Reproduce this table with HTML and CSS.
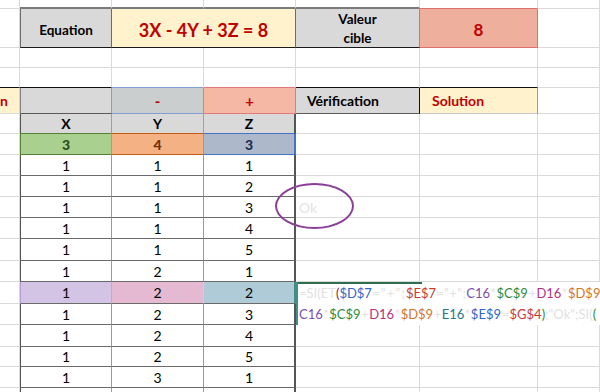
FILE: index.html
```html
<!DOCTYPE html>
<html lang="fr">
<head>
<meta charset="utf-8">
<link rel="stylesheet" href="styles.css">
</head>
<body>
<div class="sheet">
  <div class="row h9">
    <div class="c"></div><div class="c top-d"></div><div class="c top-d"></div><div class="c top-d"></div><div class="c top-d"></div><div class="c top-r"></div><div class="c"></div>
  </div>
  <div class="row h39">
    <div class="c"></div>
    <div class="c eq-label">Equation</div>
    <div class="c eq-val span2">3X - 4Y + 3Z = 8</div>
    <div class="c vc">Valeur<br>cible</div>
    <div class="c target">8</div>
    <div class="c"></div>
  </div>
  <div class="row h20">
    <div class="c"></div><div class="c"></div><div class="c"></div><div class="c"></div><div class="c"></div><div class="c"></div><div class="c"></div>
  </div>
  <div class="row h20">
    <div class="c bb-k"></div><div class="c bb-k"></div><div class="c bb-b"></div><div class="c bb-r"></div><div class="c bb-k"></div><div class="c bb-k"></div><div class="c"></div>
  </div>
  <div class="row h26">
    <div class="c sol-cut">Solution</div>
    <div class="c hdr-g"></div>
    <div class="c minus">-</div>
    <div class="c plus">+</div>
    <div class="c verif">Vérification</div>
    <div class="c solution">Solution</div>
    <div class="c"></div>
  </div>
  <div class="row h20">
    <div class="c"></div>
    <div class="c xyz x1">X</div>
    <div class="c xyz x2">Y</div>
    <div class="c xyz x3">Z</div>
    <div class="c"></div><div class="c"></div><div class="c"></div>
  </div>
  <div class="row h21">
    <div class="c"></div>
    <div class="c v-g">3</div>
    <div class="c v-o">4</div>
    <div class="c v-b">3</div>
    <div class="c"></div><div class="c"></div><div class="c"></div>
  </div>
  <div class="row h21"><div class="c"></div><div class="c d1">1</div><div class="c d2">1</div><div class="c d3">1</div><div class="c"></div><div class="c"></div><div class="c"></div></div>
  <div class="row h21"><div class="c"></div><div class="c d1">1</div><div class="c d2">1</div><div class="c d3">2</div><div class="c"></div><div class="c"></div><div class="c"></div></div>
  <div class="row h21"><div class="c"></div><div class="c d1">1</div><div class="c d2">1</div><div class="c d3">3</div><div class="c ok">Ok</div><div class="c"></div><div class="c"></div></div>
  <div class="row h21"><div class="c"></div><div class="c d1">1</div><div class="c d2">1</div><div class="c d3">4</div><div class="c"></div><div class="c"></div><div class="c"></div></div>
  <div class="row h22"><div class="c"></div><div class="c d1">1</div><div class="c d2">1</div><div class="c d3">5</div><div class="c"></div><div class="c"></div><div class="c"></div></div>
  <div class="row h21"><div class="c"></div><div class="c d1">1</div><div class="c d2">2</div><div class="c d3">1</div><div class="c"></div><div class="c"></div><div class="c"></div></div>
  <div class="row h22"><div class="c"></div><div class="c d1 hl-p">1</div><div class="c d2 hl-k">2</div><div class="c d3 hl-t">2</div><div class="c"></div><div class="c"></div><div class="c"></div></div>
  <div class="row h21"><div class="c"></div><div class="c d1">1</div><div class="c d2">2</div><div class="c d3">3</div><div class="c"></div><div class="c"></div><div class="c"></div></div>
  <div class="row h22"><div class="c"></div><div class="c d1">1</div><div class="c d2">2</div><div class="c d3">4</div><div class="c"></div><div class="c"></div><div class="c"></div></div>
  <div class="row h20"><div class="c"></div><div class="c d1">1</div><div class="c d2">2</div><div class="c d3">5</div><div class="c"></div><div class="c"></div><div class="c"></div></div>
  <div class="row h21"><div class="c"></div><div class="c d1">1</div><div class="c d2">3</div><div class="c d3">1</div><div class="c"></div><div class="c"></div><div class="c"></div></div>
  <div class="row h21"><div class="c"></div><div class="c d1">1</div><div class="c d2">3</div><div class="c d3">2</div><div class="c"></div><div class="c"></div><div class="c"></div></div>

  <div class="ellipse"></div>

  <div class="formula">
    <div class="fline"><span class="f">=SI(ET</span><span class="k0">(</span><span class="k1">$D$7</span><span class="f gap1">="+";</span><span class="k2">$E$7</span><span class="f gap2">="+";</span><span class="k3">C16</span><span class="f op">*</span><span class="k4">$C$9</span><span class="f op">+</span><span class="k5">D16</span><span class="f op">*</span><span class="k6">$D$9</span></div>
    <div class="fline"><span class="k3">C16</span><span class="f op">*</span><span class="k4">$C$9</span><span class="f op">+</span><span class="k5">D16</span><span class="f op">*</span><span class="k6">$D$9</span><span class="f op">+</span><span class="k7">E16</span><span class="f op">*</span><span class="k8">$E$9</span><span class="f op">=</span><span class="k9">$G$4</span><span class="k4">)</span><span class="f">;"Ok";SI(</span><span class="k4">(</span></div>
  </div>
</div>
</body>
</html>
```

FILE: styles.css
```css
* { box-sizing: border-box; }
html, body { margin: 0; padding: 0; background: #ffffff; }
body { width: 600px; height: 392px; overflow: hidden; font-family: Lato, "Open Sans", "Liberation Sans", sans-serif; font-size: 14px; color: #000; }

.sheet { position: relative; width: 600px; }

.row { display: grid; grid-template-columns: 20px 92px 92px 92px 124px 118px 62px; }
.h9 { height: 9px; }
.h20 { height: 20px; }
.h21 { height: 21px; }
.h22 { height: 22px; }
.h26 { height: 26px; }
.h39 { height: 39px; }

.c {
  border-right: 1px solid #dadada;
  border-bottom: 1px solid #dadada;
  display: flex;
  align-items: center;
  justify-content: center;
  overflow: hidden;
  white-space: nowrap;
}
.span2 { grid-column: span 2; }

.top-d { border-bottom: 2px solid #7a7a7a; }
.top-r { border-bottom: 1px solid #e07070; }

.eq-label { background: #d9d9d9; border-left: 1px solid #6b6b6b; border-right-color: #6b6b6b; border-bottom-color: #1a1a1a; font-weight: 700; font-size: 13.5px; padding-top: 3px; }
.eq-val { background: #fff2cc; border-right-color: #6b6b6b; border-bottom-color: #1a1a1a; color: #c00000; font-weight: 700; font-size: 18px; padding-top: 3px; }
.vc { background: #d9d9d9; border-right-color: #e07070; border-bottom-color: #1a1a1a; font-weight: 700; font-size: 13.5px; text-align: center; line-height: 19px; white-space: normal; padding-top: 1px; }
.target { background: #eeb09c; border-right-color: #e07070; border-bottom-color: #e07070; color: #c00000; font-weight: 700; font-size: 17px; padding-top: 2px; }

.bb-k { border-bottom-color: #111; }
.bb-b { border-bottom-color: #7f9fd6; }
.bb-r { border-bottom-color: #e07a7a; }

.sol-cut { background: #fff2cc; justify-content: flex-end; padding-right: 11px; color: #c00000; font-weight: 700; border-right-color: #d6d6d6; }
.hdr-g { background: #d9d9d9; border-left: 1px solid #808080; border-right-color: #7f9fd6; border-bottom-color: #5a5a5a; }
.minus { background: #cacece; border-right-color: #7f9fd6; border-bottom-color: #7f9fd6; color: #c00000; font-weight: 700; font-size: 15px; }
.plus { background: #f4b8a4; border-right-color: #e07a7a; border-bottom-color: #e07a7a; color: #c00000; font-weight: 700; font-size: 15px; }
.verif { background: #d9d9d9; border-right-color: #111; border-bottom-color: #5a5a5a; justify-content: flex-start; padding-left: 11px; font-weight: 700; }
.solution { background: #fff2cc; border-right-color: #9a9a9a; border-bottom-color: #c4c4c4; justify-content: flex-start; padding-left: 12px; color: #c00000; font-weight: 700; }

.xyz { background: #d9d9d9; font-weight: 700; border-right-color: #a0a0a0; }
.x1 { border-left: 1px solid #555; border-bottom-color: #548235; }
.x2 { border-bottom-color: #c55a11; }
.x3 { border-right: 2px solid #555; border-bottom-color: #4472c4; }

.v-g { background: #a9d08e; color: #2f4d1c; font-weight: 900; border-left: 1px solid #548235; border-right-color: #8bb070; border-bottom-color: #548235; }
.v-o { background: #f4b183; color: #6f320a; font-weight: 900; border-right-color: #d88a55; border-bottom-color: #c55a11; }
.v-b { background: #adb9ca; color: #1a2f55; font-weight: 900; border-right: 2px solid #4472c4; border-bottom-color: #4472c4; }

.d1 { border-left: 1px solid #555; border-right-color: #9a9a9a; border-bottom-color: #6a6a6a; }
.d2 { border-right-color: #9a9a9a; border-bottom-color: #6a6a6a; }
.d3 { border-right: 2px solid #555; border-bottom-color: #6a6a6a; }

.hl-p { background: #d3c4e6; border-left-color: #b49ad6; border-right-color: #c7a6d0; }
.hl-k { background: #e6b9d2; border-right-color: #c2d4dc; }
.hl-t { background: #afcbd7; border-right-color: #3f8f86; }

.ok { justify-content: flex-start; padding-left: 3px; color: #e4e4e4; }

.ellipse {
  position: absolute;
  left: 275px; top: 183px;
  width: 79px; height: 46px;
  border: 2px solid #8b3f99;
  border-radius: 50%;
}

.formula {
  position: absolute;
  left: 296px; top: 282px;
  width: 304px; height: 43px;
  background: #ffffff;
  border-left: 2px solid #3f8f86;
  padding-left: 1px;
  font-size: 13px;
  white-space: nowrap;
  overflow: hidden;
}
.formula::before {
  content: "";
  position: absolute;
  left: -2px; top: 0;
  width: 126px; height: 2px;
  background: #2e6e4e;
}
.fline { height: 21px; line-height: 22px; }
.f { color: #e2e2e2; }
.op { padding: 0 0.5px; }
.gap1 { letter-spacing: 1.2px; }
.gap2 { letter-spacing: 0.4px; }
.k0 { color: #a01818; }
.k1 { color: #3566c4; }
.k2 { color: #c43c32; }
.k3 { color: #7d4fb0; }
.k4 { color: #2f8a3c; }
.k5 { color: #b2337f; }
.k6 { color: #d2762a; }
.k7 { color: #2a7390; }
.k8 { color: #3168c8; }
.k9 { color: #c83a3a; }
```
